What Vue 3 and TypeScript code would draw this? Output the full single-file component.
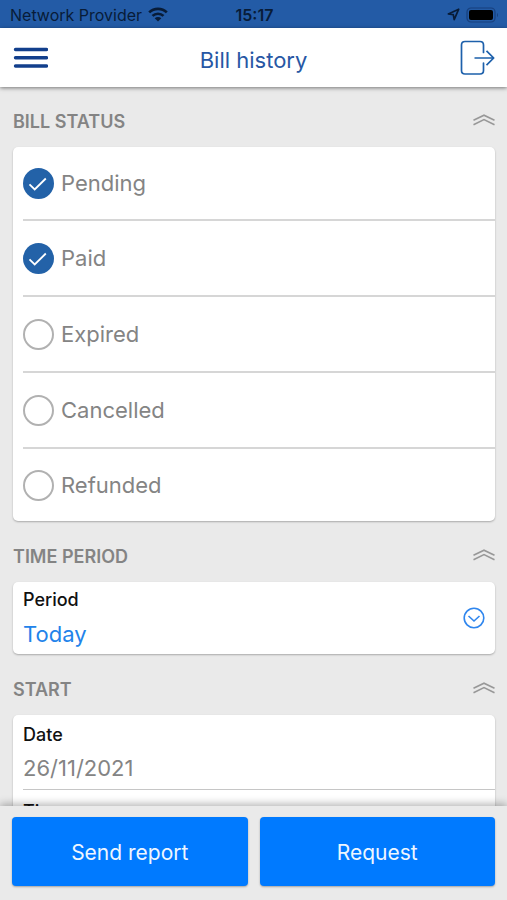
<script setup lang="ts">
import { reactive, ref } from 'vue'

interface StatusOption {
  id: string
  label: string
  checked: boolean
}

type SectionKey = 'status' | 'period' | 'start'

const statuses = ref<StatusOption[]>([
  { id: 'pending', label: 'Pending', checked: true },
  { id: 'paid', label: 'Paid', checked: true },
  { id: 'expired', label: 'Expired', checked: false },
  { id: 'cancelled', label: 'Cancelled', checked: false },
  { id: 'refunded', label: 'Refunded', checked: false },
])

const sections: { key: SectionKey; title: string }[] = [
  { key: 'status', title: 'BILL STATUS' },
  { key: 'period', title: 'TIME PERIOD' },
  { key: 'start', title: 'START' },
]

const open = reactive<Record<SectionKey, boolean>>({ status: true, period: true, start: true })
const period = ref('Today')
const startDate = ref('26/11/2021')
const startTime = ref('')
</script>

<template>
  <div class="screen">
    <div class="status-bar">
      <div class="carrier">
        <span>Network Provider</span>
        <svg width="20" height="15" viewBox="0 0 20 15" aria-hidden="true">
          <g fill="none" stroke="currentColor" stroke-width="2.7">
            <path d="M1.2 5.4C6 .7 14 .7 18.800 5.400" />
            <path d="M4.500 8.900C7.500 6 12.500 6 15.500 8.900" />
          </g>
          <path d="M10 14.500 6.700 11.200C8.500 9.600 11.500 9.600 13.300 11.200Z" fill="currentColor" />
        </svg>
      </div>
      <span class="clock">15:17</span>
      <div class="indicators">
        <svg width="13" height="13" viewBox="0 0 13 13" aria-hidden="true">
          <path d="M11.700 1.200 1.300 5.900 6.300 6.700 7.200 11.700Z" fill="none" stroke="currentColor" stroke-width="1.700" stroke-linejoin="round" />
        </svg>
        <svg width="33" height="16" viewBox="0 0 33 16" aria-hidden="true">
          <rect x="1" y="1" width="28" height="14" rx="4" fill="none" stroke="#173f7c" stroke-width="1.200" />
          <rect x="3" y="3" width="24" height="10" rx="2" fill="#000" />
          <path d="M31 6c1.300.6 1.300 3.400 0 4z" fill="#173f7c" />
        </svg>
      </div>
    </div>

    <header class="app-bar">
      <button class="icon-button" type="button" aria-label="Menu">
        <svg width="36" height="22" viewBox="0 0 36 22" aria-hidden="true">
          <path d="M3.500 2.500H34.500M3.500 10.800H34.500M3.500 19H34.500" stroke="#123f8c" stroke-width="3.400" stroke-linecap="round" />
        </svg>
      </button>
      <h1>Bill history</h1>
      <button class="icon-button end" type="button" aria-label="Log out">
        <svg width="36" height="36" viewBox="0 0 36 36" fill="none" stroke="#1d60ab" stroke-width="1.700" aria-hidden="true">
          <path d="M24.500 12.500V5Q24.500 1.500 21 1.500H6Q2.500 1.500 2.500 5V30.500Q2.500 34 6 34H21Q24.500 34 24.500 30.500V23" stroke-linecap="round" />
          <path d="M15.500 18H34.500M27.500 10.800 34.700 18 27.500 25.200" stroke-linejoin="round" />
        </svg>
      </button>
    </header>

    <main>
      <section v-for="section in sections" :key="section.key">
        <div class="section-head">
          <h2>{{ section.title }}</h2>
          <button
            class="icon-button"
            type="button"
            :aria-label="'Toggle ' + section.title"
            :aria-expanded="open[section.key]"
            @click="open[section.key] = !open[section.key]"
          >
            <svg width="22" height="16" viewBox="1 0 22 16" fill="none" stroke="#989898" stroke-width="1.600" aria-hidden="true">
              <path d="M1.500 7.300 12 2.200 22.500 7.300M1.500 11.700 12 6.600 22.500 11.700" />
            </svg>
          </button>
        </div>

        <ul v-if="section.key === 'status' && open.status" class="card options">
          <li v-for="status in statuses" :key="status.id">
            <label :for="status.id">
              <span class="tick">
                <input :id="status.id" v-model="status.checked" type="checkbox" />
                <svg v-if="status.checked" width="31" height="31" viewBox="0 0 31 31" aria-hidden="true">
                  <path d="M6.500 16.300 11.700 21.500 22.800 10.500" fill="none" stroke="#fff" stroke-width="1.800" />
                </svg>
              </span>
              {{ status.label }}
            </label>
          </li>
        </ul>

        <div v-if="section.key === 'period' && open.period" class="card picker">
          <label for="period">Period</label>
          <select id="period" v-model="period">
            <option>Today</option>
            <option>Yesterday</option>
            <option>Last week</option>
          </select>
          <svg width="22" height="22" viewBox="0 0 22 22" fill="none" stroke="#2f86ee" stroke-width="1.600" aria-hidden="true">
            <circle cx="11" cy="11" r="9.800" />
            <path d="M5.500 9 11 14 16.500 9" />
          </svg>
        </div>

        <div v-if="section.key === 'start' && open.start" class="card fields">
          <div class="field">
            <label for="start-date">Date</label>
            <input id="start-date" v-model="startDate" type="text" />
          </div>
          <div class="field">
            <label for="start-time">Time</label>
            <input id="start-time" v-model="startTime" type="text" />
          </div>
        </div>
      </section>
    </main>

    <footer>
      <button type="button">Send report</button>
      <button type="button">Request</button>
    </footer>
  </div>
</template>

<style>
body {
  background: #eaeaea;
}
</style>

<style scoped>
.screen {
  display: flex;
  flex-direction: column;
  height: 100vh;
  background: #eaeaea;
  color: #848484;
  font-family: Inter, "Liberation Sans", sans-serif;
  font-size: 22px;
}

h1,
h2,
ul {
  margin: 0;
  padding: 0;
}

button,
input,
select {
  margin: 0;
  padding: 0;
  border: 0;
  background: none;
  font: inherit;
}

svg {
  display: block;
}

.status-bar,
.app-bar {
  display: grid;
  grid-template-columns: 1fr auto 1fr;
  align-items: center;
  flex: none;
}

.status-bar {
  box-sizing: border-box;
  height: 28px;
  padding: 1px 8px 0 10px;
  background: #235ba6;
  color: #081c38;
  font-size: 16px;
}

.carrier,
.indicators {
  display: flex;
  align-items: center;
  gap: 6px;
}

.indicators {
  justify-content: flex-end;
}

.clock {
  font-weight: 600;
}

.app-bar {
  position: relative;
  height: 59px;
  padding: 0 12px;
  background: #fff;
  box-shadow: 0 1px 4px rgba(0, 0, 0, 0.5);
}

.app-bar h1 {
  padding-top: 4px;
  color: #2757a4;
  font-size: 22px;
  font-weight: 400;
}

.icon-button {
  justify-self: start;
  cursor: pointer;
}

.icon-button.end {
  justify-self: end;
}

main {
  flex: 1;
  min-height: 0;
  overflow-y: auto;
  scrollbar-width: none;
  padding: 0 12px 0 13px;
}

.section-head {
  display: flex;
  align-items: center;
  justify-content: space-between;
  height: 52px;
  padding-top: 8px;
}

.section-head h2 {
  font-size: 18px;
  font-weight: 600;
}

.card {
  margin-bottom: 1px;
  border-radius: 5px;
  background: #fff;
  box-shadow: 0 1px 2px rgba(0, 0, 0, 0.28);
}

.options {
  padding-left: 10px;
  list-style: none;
}

.options li {
  box-sizing: border-box;
  height: 76px;
  border-bottom: 2px solid #d6d6d6;
}

.options li:first-child {
  height: 74px;
}

.options li:last-child {
  height: 72px;
  border-bottom: 0;
}

.options label {
  display: flex;
  align-items: center;
  gap: 7px;
  height: 100%;
}

.tick {
  display: grid;
}

.tick > * {
  grid-area: 1 / 1;
}

.tick svg {
  pointer-events: none;
}

.tick input {
  appearance: none;
  box-sizing: border-box;
  width: 31px;
  height: 31px;
  border: 2px solid #b1b1b1;
  border-radius: 50%;
}

.tick input:checked {
  border-color: #2362a8;
  background: #2362a8;
}

.picker label,
.field label {
  color: #111;
  font-size: 18px;
  font-weight: 500;
  line-height: 24px;
}

.picker {
  display: grid;
  grid-template-columns: 1fr auto;
  align-items: center;
  padding: 6px 10px;
}

.picker label {
  grid-area: 1 / 1;
}

.picker select {
  grid-area: 2 / 1 / 3 / 3;
  appearance: none;
  height: 36px;
  padding-top: 8px;
  color: #2283ea;
}

.picker svg {
  grid-area: 1 / 2 / 3 / 3;
  pointer-events: none;
}

.fields {
  padding-left: 10px;
}

.field {
  display: flex;
  flex-direction: column;
  padding-top: 8px;
  border-bottom: 1px solid #c6c6c6;
}

.field + .field {
  padding-top: 10px;
}

.field input {
  width: 100%;
  height: 42px;
  color: #848484;
}

footer {
  position: relative;
  display: flex;
  flex: none;
  gap: 12px;
  padding: 11px 12px 14px;
  background: #eaeaea;
  box-shadow: 0 -2px 8px rgba(0, 0, 0, 0.3);
}

footer button {
  flex: 1;
  height: 69px;
  padding-top: 2px;
  border-radius: 4px;
  background: #007aff;
  box-shadow: 0 1px 2px rgba(0, 0, 0, 0.3);
  color: #eef6ff;
  font-size: 21px;
}
</style>
